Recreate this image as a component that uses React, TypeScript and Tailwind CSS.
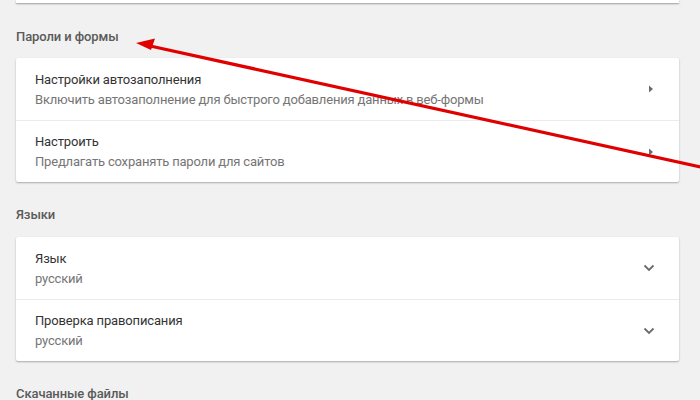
import React from "react";

const ArrowRight = () => (
  <svg width="10" height="10" viewBox="0 0 10 10" className="shrink-0">
    <path d="M3 1.5 L7 5 L3 8.5 Z" fill="#6b6b6b" />
  </svg>
);

const ChevronDown = () => (
  <svg width="14" height="14" viewBox="0 0 14 14" className="shrink-0">
    <path d="M2.5 4.5 L7 9 L11.5 4.5" fill="none" stroke="#6b6b6b" strokeWidth="1.8" />
  </svg>
);

type RowProps = { title: string; sub: string; icon: "arrow" | "chevron"; divider?: boolean };

const Row = ({ title, sub, icon, divider }: RowProps) => (
  <div className={"flex items-center h-[62px] pl-[19px] pr-[23px] " + (divider ? "border-t border-[#ebebeb]" : "")}>
    <div className="flex-1 flex flex-col pt-[1px]">
      <div className="text-[13px] leading-[20px] tracking-[-0.15px] text-[#333333]">{title}</div>
      <div className="text-[13px] leading-[20px] tracking-[-0.18px] text-[#757575]">{sub}</div>
    </div>
    {icon === "arrow" ? <ArrowRight /> : <ChevronDown />}
  </div>
);

const Header = ({ text }: { text: string }) => (
  <div className="text-[13px] leading-[20px] font-medium tracking-[-0.1px] text-[#5a5a5a] pl-[16px]">{text}</div>
);

export default function App() {
  return (
    <div
      className="relative w-[700px] h-[400px] overflow-hidden bg-[#f1f1f1]"
      style={{ fontFamily: "Roboto, 'Noto Sans', sans-serif" }}
    >
      <div className="ml-[16px] w-[663px] h-[3px] bg-white shadow-[0_1px_2px_rgba(0,0,0,0.35)]" />
      <div className="mt-[24px]">
        <Header text="Пароли и формы" />
      </div>
      <div className="mt-[11px] ml-[16px] w-[663px] bg-white rounded-[2px] shadow-[0_1px_2px_rgba(0,0,0,0.3)]">
        <Row title="Настройки автозаполнения" sub="Включить автозаполнение для быстрого добавления данных в веб-формы" icon="arrow" />
        <Row title="Настроить" sub="Предлагать сохранять пароли для сайтов" icon="arrow" divider />
      </div>
      <div className="mt-[23px]">
        <Header text="Языки" />
      </div>
      <div className="mt-[12px] ml-[16px] w-[663px] bg-white rounded-[2px] shadow-[0_1px_2px_rgba(0,0,0,0.3)]">
        <Row title="Язык" sub="русский" icon="chevron" />
        <Row title="Проверка правописания" sub="русский" icon="chevron" divider />
      </div>
      <div className="mt-[23px]">
        <Header text="Скачанные файлы" />
      </div>
      <svg className="absolute inset-0 pointer-events-none" width="700" height="400" viewBox="0 0 700 400">
        <line x1="148" y1="45.5" x2="705" y2="168" stroke="#e00000" strokeWidth="3.2" />
        <polygon points="136,43 155,38.5 151,50" fill="#e00000" />
      </svg>
    </div>
  );
}
